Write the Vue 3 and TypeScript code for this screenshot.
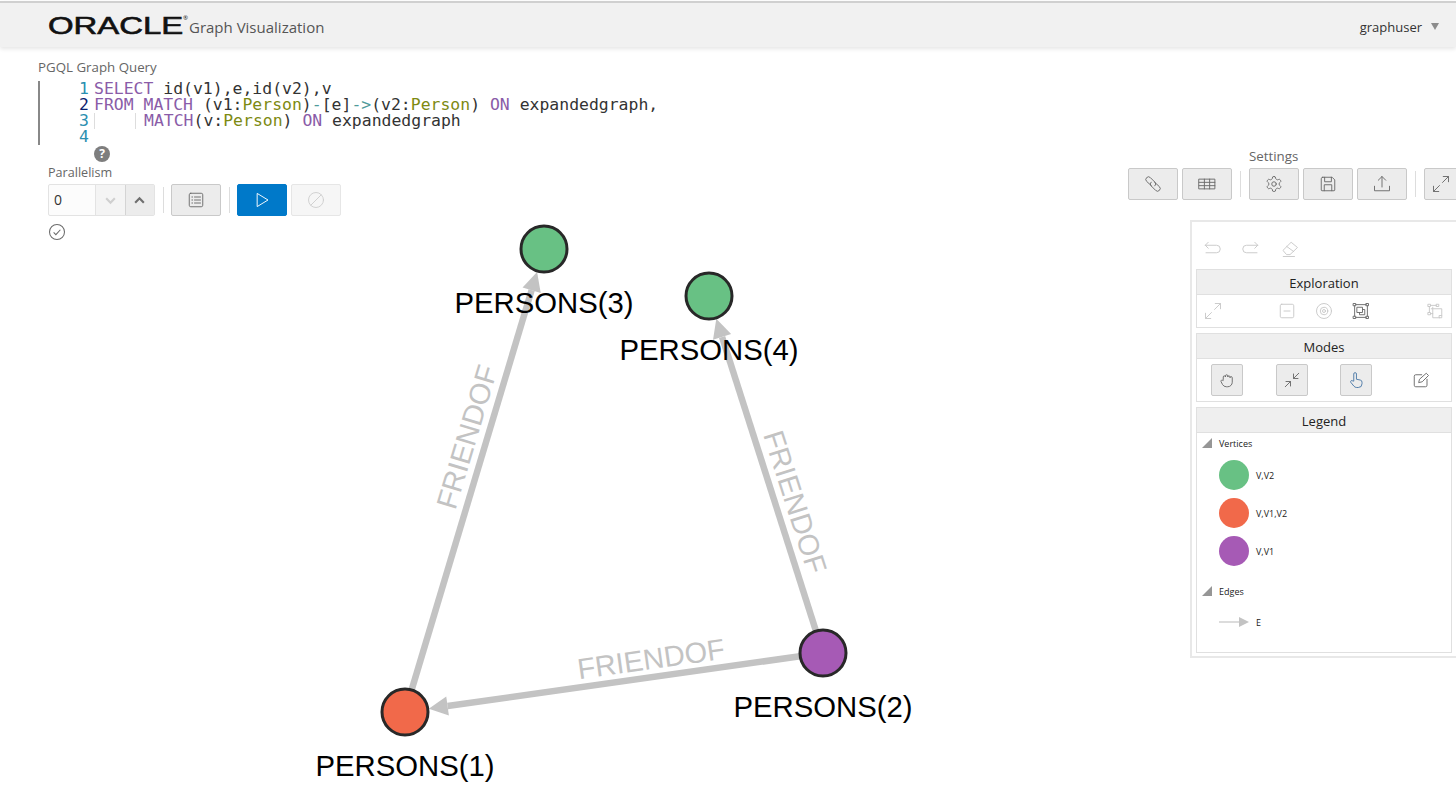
<script setup lang="ts">
interface GraphNode {
  id: number;
  x: number;
  y: number;
  color: string;
  labelX: number;
  labelY: number;
}

interface Edge {
  from: number;
  to: number;
  labelX: number;
  labelY: number;
}

const icons: Record<string, string> = {
  link: 'M10 14.5 3.5 8.5a3.5 3.5 0 0 1 5-5l6 6a3.5 3.5 0 0 1 0 5M14 9.5l6.5 6a3.5 3.5 0 0 1-5 5l-6-6a3.5 3.5 0 0 1 0-5',
  table: 'M1.5 5.5h21v13h-21zM1.5 9.8h21M1.5 14.2h21M8.5 5.5v13M15.5 5.5v13',
  gear: 'M12.22 2h-.44a2 2 0 0 0-2 2v.18a2 2 0 0 1-1 1.73l-.43.25a2 2 0 0 1-2 0l-.15-.08a2 2 0 0 0-2.73.73l-.22.38a2 2 0 0 0 .73 2.73l.15.1a2 2 0 0 1 1 1.72v.51a2 2 0 0 1-1 1.74l-.15.09a2 2 0 0 0-.73 2.73l.22.38a2 2 0 0 0 2.73.73l.15-.08a2 2 0 0 1 2 0l.43.25a2 2 0 0 1 1 1.73V20a2 2 0 0 0 2 2h.44a2 2 0 0 0 2-2v-.18a2 2 0 0 1 1-1.73l.43-.25a2 2 0 0 1 2 0l.15.08a2 2 0 0 0 2.73-.73l.22-.39a2 2 0 0 0-.73-2.73l-.15-.08a2 2 0 0 1-1-1.74v-.5a2 2 0 0 1 1-1.74l.15-.09a2 2 0 0 0 .73-2.73l-.22-.38a2 2 0 0 0-2.73-.73l-.15.08a2 2 0 0 1-2 0l-.43-.25a2 2 0 0 1-1-1.73V4a2 2 0 0 0-2-2zM15 12a3 3 0 1 1-6 0 3 3 0 0 1 6 0z',
  save: 'M5 3h12.5L21 6.5V20a1 1 0 0 1-1 1H4a1 1 0 0 1-1-1V5a2 2 0 0 1 2-2zM7.5 3v6h9V3M7 21v-8h10v8',
  upload: 'M12 16V2M7 7l5-5 5 5M2 15v6h20v-6',
  expand: 'M14 10l8-8M15 2h7v7M10 14l-8 8M2 15v7h7',
  collapse: 'M21 3l-7 7M14 4v6h6M3 21l7-7M4 14h6v6',
  undo: 'M7 3 3 7l4 4M3 7h15a5 5 0 0 1 0 10H4',
  redo: 'M17 3l4 4-4 4M21 7H6a5 5 0 0 0 0 10h14',
  eraser: 'M3 13.5 13.5 3 22 10 12 19.5H8zM7.5 8.5l9.5 7M3 22h15',
  minusBox: 'M5 3h14a2 2 0 0 1 2 2v14a2 2 0 0 1-2 2H5a2 2 0 0 1-2-2V5a2 2 0 0 1 2-2zM8 12h8',
  target: 'M22 12a10 10 0 1 1-20 0 10 10 0 0 1 20 0zM17 12a5 5 0 1 1-10 0 5 5 0 0 1 10 0zM14 12a2 2 0 1 1-4 0 2 2 0 0 1 4 0z',
  focus: 'M2 2h3v3H2zM19 2h3v3h-3zM2 19h3v3H2zM19 19h3v3h-3zM5 3.5h14M5 20.5h14M3.5 5v14M20.5 5v14M7 7h7v7H7zM10 14v3h7v-7h-3',
  group: 'M3 3h3v3H3zM3 14h3v3H3zM14 3h3v3h-3zM18 18h3v3h-3zM6 4.5h8M4.5 6v8M7 9h14v9M9 7v14h9M6 15.5h3',
  hand: 'M7 11V8a1.5 1.5 0 0 1 3 0V6.5a1.5 1.5 0 0 1 3 0V8a1.5 1.5 0 0 1 3 0v1a1.5 1.5 0 0 1 3 0v6a6 6 0 0 1-6 6h-2a6 6 0 0 1-5-3l-2-4a1.5 1.5 0 0 1 2.5-1.5z',
  pointer: 'M9 13V4a1.8 1.8 0 0 1 3.6 0v7l5 1a3 3 0 0 1 2.4 3v2a5 5 0 0 1-5 5h-2a5 5 0 0 1-4-2l-4-5a1.6 1.6 0 0 1 2.4-2z',
  edit: 'M20 11v8a2 2 0 0 1-2 2H5a2 2 0 0 1-2-2V7a2 2 0 0 1 2-2h8M9 15l1-4L19 3l3 3-8 8z',
  list: 'M5 3h14a2 2 0 0 1 2 2v14a2 2 0 0 1-2 2H5a2 2 0 0 1-2-2V5a2 2 0 0 1 2-2zM10 8h8M10 12h8M10 16h8M6.5 8h1M6.5 12h1M6.5 16h1',
  play: 'M6 3.5 20 12 6 20.5z',
  ban: 'M22 12a10 10 0 1 1-20 0 10 10 0 0 1 20 0zM5 19 19 5',
  check: 'M22 12a10 10 0 1 1-20 0 10 10 0 0 1 20 0zM7.5 12.5l3 3 6-6.5',
};

const nodes: GraphNode[] = [
  { id: 1, x: 405, y: 712, color: '#f1694a', labelX: 405, labelY: 776 },
  { id: 2, x: 823, y: 653, color: '#a65ab5', labelX: 823, labelY: 717 },
  { id: 3, x: 544, y: 249, color: '#68c184', labelX: 544, labelY: 313 },
  { id: 4, x: 709, y: 296, color: '#68c184', labelX: 709, labelY: 360 },
];

const edges: Edge[] = [
  { from: 1, to: 3, labelX: 467, labelY: 437 },
  { from: 2, to: 4, labelX: 795, labelY: 502 },
  { from: 2, to: 1, labelX: 651, labelY: 659 },
];

// edge geometry, the head stops at the rim of the target circle
function nodeById(id: number): GraphNode {
  return nodes.find((n) => n.id === id) as GraphNode;
}

const drawnEdges = edges.map((edge) => {
  const a = nodeById(edge.from);
  const b = nodeById(edge.to);
  const len = Math.hypot(b.x - a.x, b.y - a.y);
  const ux = (b.x - a.x) / len;
  const uy = (b.y - a.y) / len;
  const tipX = b.x - ux * 24;
  const tipY = b.y - uy * 24;
  const baseX = tipX - ux * 19;
  const baseY = tipY - uy * 19;
  let angle = (Math.atan2(uy, ux) * 180) / Math.PI;
  if (angle > 90) angle -= 180;
  if (angle < -90) angle += 180;
  return {
    key: `${edge.from}-${edge.to}`,
    x1: a.x,
    y1: a.y,
    x2: baseX,
    y2: baseY,
    head: `${tipX},${tipY} ${baseX - uy * 9.5},${baseY + ux * 9.5} ${baseX + uy * 9.5},${baseY - ux * 9.5}`,
    labelX: edge.labelX,
    labelY: edge.labelY,
    angle,
  };
});

const legendVertices = [
  { label: 'V,V2', color: '#68c184' },
  { label: 'V,V1,V2', color: '#f1694a' },
  { label: 'V,V1', color: '#a65ab5' },
];

const explorationIcons = [
  { name: 'expand', on: false },
  { name: 'spacer', on: false },
  { name: 'minusBox', on: false },
  { name: 'target', on: false },
  { name: 'focus', on: true },
  { name: 'spacer', on: false },
  { name: 'group', on: false },
];
</script>

<template>
  <div class="page">
    <header class="topbar">
      <div class="brand">
        <span class="logo">ORACLE</span>
        <span class="reg">®</span>
        <span class="title">Graph Visualization</span>
      </div>
      <div class="user">
        <span>graphuser</span>
        <i class="caret"></i>
      </div>
    </header>

    <section class="query">
      <div class="query-label">PGQL Graph Query</div>
      <div class="editor">
        <div class="gutter">
          <span>1</span>
          <span class="active">2</span>
          <span>3</span>
          <span>4</span>
        </div>
        <pre class="code"><span class="kw">SELECT</span> id(v1),e,id(v2),v
<span class="kw">FROM</span> <span class="kw">MATCH</span> (v1:<span class="ty">Person</span>)<span class="op">-</span>[e]<span class="op">-&gt;</span>(v2:<span class="ty">Person</span>) <span class="kw">ON</span> expandedgraph,
<span class="guide"></span><span class="kw">MATCH</span>(v:<span class="ty">Person</span>) <span class="kw">ON</span> expandedgraph
</pre>
      </div>
      <div class="help">?</div>
    </section>

    <section class="tools">
      <div class="run-tools">
        <div class="field-label">Parallelism</div>
        <div class="run-row">
          <div class="spinner">
            <span class="spin-value">0</span>
            <span class="spin-btn off">
              <svg viewBox="0 0 24 24" class="chev"><path d="M4 8l8 8 8-8" /></svg>
            </span>
            <span class="spin-btn">
              <svg viewBox="0 0 24 24" class="chev"><path d="M4 16l8-8 8 8" /></svg>
            </span>
          </div>
          <span class="sep"></span>
          <button class="btn">
            <svg viewBox="0 0 24 24" class="icon"><path :d="icons.list" /></svg>
          </button>
          <span class="sep"></span>
          <button class="btn primary">
            <svg viewBox="0 0 24 24" class="icon"><path :d="icons.play" /></svg>
          </button>
          <button class="btn disabled">
            <svg viewBox="0 0 24 24" class="icon"><path :d="icons.ban" /></svg>
          </button>
        </div>
        <svg viewBox="0 0 24 24" class="status"><path :d="icons.check" /></svg>
      </div>

      <div class="side">
        <div class="settings">
          <div class="settings-label">Settings</div>
          <div class="settings-row">
            <button class="btn"><svg viewBox="0 0 24 24" class="icon"><path :d="icons.link" /></svg></button>
            <button class="btn"><svg viewBox="0 0 24 24" class="icon"><path :d="icons.table" /></svg></button>
            <span class="sep"></span>
            <button class="btn"><svg viewBox="0 0 24 24" class="icon"><path :d="icons.gear" /></svg></button>
            <button class="btn"><svg viewBox="0 0 24 24" class="icon"><path :d="icons.save" /></svg></button>
            <button class="btn"><svg viewBox="0 0 24 24" class="icon"><path :d="icons.upload" /></svg></button>
            <span class="sep"></span>
            <button class="btn narrow"><svg viewBox="0 0 24 24" class="icon"><path :d="icons.expand" /></svg></button>
          </div>
        </div>

        <aside class="panel">
          <div class="history">
            <svg viewBox="0 0 24 24" class="icon faint"><path :d="icons.undo" /></svg>
            <svg viewBox="0 0 24 24" class="icon faint"><path :d="icons.redo" /></svg>
            <svg viewBox="0 0 24 24" class="icon faint"><path :d="icons.eraser" /></svg>
          </div>

          <div class="box">
            <div class="box-head">Exploration</div>
            <div class="explore-row">
              <template v-for="(item, i) in explorationIcons" :key="i">
                <span v-if="item.name === 'spacer'" class="explore-gap"></span>
                <svg v-else viewBox="0 0 24 24" class="icon" :class="{ faint: !item.on }">
                  <path :d="icons[item.name]" />
                </svg>
              </template>
            </div>
          </div>

          <div class="box">
            <div class="box-head">Modes</div>
            <div class="modes-row">
              <button class="mode"><svg viewBox="0 0 24 24" class="icon"><path :d="icons.hand" /></svg></button>
              <button class="mode"><svg viewBox="0 0 24 24" class="icon"><path :d="icons.collapse" /></svg></button>
              <button class="mode current"><svg viewBox="0 0 24 24" class="icon"><path :d="icons.pointer" /></svg></button>
              <button class="mode plain"><svg viewBox="0 0 24 24" class="icon"><path :d="icons.edit" /></svg></button>
            </div>
          </div>

          <div class="box legend">
            <div class="box-head">Legend</div>
            <div class="legend-group"><i class="corner"></i>Vertices</div>
            <div v-for="v in legendVertices" :key="v.label" class="legend-item">
              <span class="swatch" :style="{ background: v.color }"></span>
              <span>{{ v.label }}</span>
            </div>
            <div class="legend-group edges"><i class="corner"></i>Edges</div>
            <div class="legend-edge">
              <svg width="30" height="12" viewBox="0 0 30 12">
                <path d="M0 6h20" stroke="#dcdcdc" stroke-width="2" />
                <path d="M20 1l10 5-10 5z" fill="#c3c3c3" />
              </svg>
              <span>E</span>
            </div>
          </div>
        </aside>
      </div>
    </section>

    <!-- graph canvas, node places are the content -->
    <svg class="graph" width="1190" height="788" viewBox="0 0 1190 788">
      <g v-for="e in drawnEdges" :key="e.key">
        <line :x1="e.x1" :y1="e.y1" :x2="e.x2" :y2="e.y2" class="edge" />
        <polygon :points="e.head" class="head" />
        <text
          class="edge-label"
          :x="e.labelX"
          :y="e.labelY"
          :transform="`rotate(${e.angle} ${e.labelX} ${e.labelY})`"
        >FRIENDOF</text>
      </g>
      <g v-for="n in nodes" :key="n.id">
        <circle :cx="n.x" :cy="n.y" r="23" :fill="n.color" class="node" />
        <text class="node-label" :x="n.labelX" :y="n.labelY">PERSONS({{ n.id }})</text>
      </g>
    </svg>
  </div>
</template>

<style scoped>
.page {
  position: relative;
  width: 1456px;
  height: 788px;
  overflow: hidden;
  background: #fff;
  font-family: "Open Sans", "Noto Sans", sans-serif;
  color: #333;
}

.topbar {
  height: 44px;
  margin-top: 1px;
  border-top: 2px solid #d0d0d0;
  background: #f1f1f1;
  box-shadow: 0 2px 4px rgba(0, 0, 0, 0.1);
  display: flex;
  align-items: center;
  justify-content: space-between;
  padding: 0 17px 0 48px;
}

.brand {
  display: flex;
  align-items: center;
}

.logo {
  display: inline-block;
  width: 95px;
  margin-right: 41px;
  margin-top: 2px;
  font: 23px/23px "Liberation Sans", sans-serif;
  -webkit-text-stroke: 0.6px #111;
  color: #111;
  transform: scaleX(1.43);
  transform-origin: left center;
}

.reg {
  font-size: 6px;
  margin: -14px 0 0 -1px;
  color: #111;
}

.title {
  font-size: 15px;
  color: #555;
  margin-left: 1px;
  margin-top: 4px;
}

.user {
  display: flex;
  align-items: center;
  font-size: 13px;
  color: #333;
  gap: 9px;
  margin-top: 3px;
}

.caret {
  width: 0;
  height: 0;
  border-left: 4.5px solid transparent;
  border-right: 4.5px solid transparent;
  border-top: 7px solid #8c8c8c;
}

.query {
  padding: 12px 0 0 38px;
  height: 101px;
  box-sizing: border-box;
  position: relative;
}

.query-label {
  font-size: 13.3px;
  line-height: 16px;
  color: #666;
}

.editor {
  display: flex;
  margin-top: 6px;
  border-left: 2px solid #888;
  height: 64px;
}

.gutter {
  width: 49px;
  display: flex;
  flex-direction: column;
  align-items: flex-end;
  font: 16.45px/16px "DejaVu Sans Mono", monospace;
  color: #2a8fb0;
}

.gutter .active {
  color: #0b216f;
}

.code {
  margin: 0 0 0 5px;
  font: 16.45px/16px "DejaVu Sans Mono", monospace;
  color: #333;
}

.kw {
  color: #8a5ca8;
}

.ty {
  color: #7d8a12;
}

.op {
  color: #4f9a9a;
}

.guide {
  display: inline-block;
  width: 40px;
  height: 16px;
  margin-right: 8px;
  border-left: 1px solid #ddd;
  border-right: 1px solid #ddd;
  vertical-align: top;
}

.help {
  position: absolute;
  left: 94px;
  top: 99px;
  width: 16px;
  height: 16px;
  border-radius: 50%;
  background: #7e7e7e;
  color: #fff;
  font-size: 12px;
  font-weight: 700;
  line-height: 16px;
  text-align: center;
}

.tools {
  display: flex;
  justify-content: space-between;
  align-items: flex-start;
  padding-left: 48px;
}

.field-label {
  font-size: 12.6px;
  line-height: 16px;
  color: #666;
  margin-top: 17px;
}

.run-row {
  display: flex;
  align-items: center;
  margin-top: 3px;
}

.spinner {
  display: flex;
  width: 107px;
  height: 32px;
  box-sizing: border-box;
  border: 1px solid #e3e3e3;
  border-radius: 2px;
  background: #fcfcfc;
  font-size: 14px;
}

.spin-value {
  width: 47px;
  line-height: 30px;
  padding-left: 5px;
  box-sizing: border-box;
}

.spin-btn {
  width: 29px;
  display: flex;
  align-items: center;
  justify-content: center;
  background: #ececec;
  border-left: 1px solid #d4d4d4;
}

.spin-btn.off {
  background: #f4f4f4;
  border-left-color: #e3e3e3;
}

.chev {
  width: 13px;
  height: 13px;
  fill: none;
  stroke: #6f6f6f;
  stroke-width: 4;
}

.spin-btn.off .chev {
  stroke: #cfcfcf;
}

.sep {
  flex: none;
  width: 1px;
  height: 26px;
  background: #ddd;
  margin: 0 7.5px;
}

.btn {
  width: 50px;
  height: 32px;
  padding: 0;
  box-sizing: border-box;
  border: 1px solid #c9c9c9;
  border-radius: 2px;
  background: #ececec;
  display: flex;
  align-items: center;
  justify-content: center;
  flex: none;
}

.btn.narrow {
  width: 34px;
}

.icon {
  width: 18px;
  height: 18px;
  fill: none;
  stroke: #6b6b6b;
  stroke-width: 1.25;
  stroke-linejoin: round;
  stroke-linecap: round;
}

.faint {
  stroke: #c9c9c9;
}

.btn.primary {
  background: #0079c9;
  border-color: #0079c9;
}

.btn.primary .icon {
  stroke: #fff;
}

.btn.disabled {
  background: #f6f6f6;
  border-color: #e6e6e6;
  margin-left: 4px;
}

.btn.disabled .icon {
  stroke: #cfcfcf;
}

.status {
  display: block;
  width: 18px;
  height: 18px;
  margin-top: 7px;
  fill: none;
  stroke: #6b6b6b;
  stroke-width: 1.4;
}

.side {
  width: 328px;
  flex: none;
}

.settings-label {
  font-size: 13.3px;
  line-height: 16px;
  color: #666;
  margin-left: 121px;
}

.settings-row {
  display: flex;
  align-items: center;
  gap: 4px;
  margin-top: 4px;
}

.settings-row .sep {
  margin: 0 4px;
}

.panel {
  margin: 20px 0 0 62px;
  width: 270px;
  height: 438px;
  box-sizing: border-box;
  border: 2px solid #e8e8e8;
  padding: 0 6px 0 4px;
}

.history {
  height: 47px;
  display: flex;
  align-items: center;
  gap: 21px;
  padding: 6px 0 0 7px;
  box-sizing: border-box;
}

.box {
  border: 1px solid #e0e0e0;
  margin-bottom: 5px;
}

.box-head {
  height: 24px;
  line-height: 26px;
  background: #efefef;
  border-bottom: 1px solid #e0e0e0;
  text-align: center;
  font-size: 13px;
  color: #222;
}

.explore-row {
  height: 32px;
  display: flex;
  align-items: center;
  justify-content: space-between;
  padding: 0 7px;
}

.explore-gap {
  width: 18px;
}

.modes-row {
  height: 42px;
  display: flex;
  align-items: center;
  justify-content: space-between;
  padding: 0 14px;
}

.mode {
  width: 32px;
  height: 32px;
  padding: 0;
  box-sizing: border-box;
  border: 1px solid #c9c9c9;
  border-radius: 2px;
  background: #ececec;
  display: flex;
  align-items: center;
  justify-content: center;
}

.mode.plain {
  background: transparent;
  border-color: transparent;
}

.mode.current .icon {
  stroke: #4d7aa8;
}

.legend {
  height: 246px;
  box-sizing: border-box;
  font-size: 9px;
  color: #222;
}

.legend-group {
  display: flex;
  align-items: center;
  gap: 7px;
  padding-left: 5px;
  height: 20px;
  margin-bottom: 3px;
}

.legend-group.edges {
  margin-top: 11px;
}

.corner {
  width: 0;
  height: 0;
  border-bottom: 10px solid #969696;
  border-left: 10px solid transparent;
}

.legend-item {
  display: flex;
  align-items: center;
  gap: 7px;
  padding-left: 22px;
  height: 38px;
}

.swatch {
  width: 30px;
  height: 30px;
  border-radius: 50%;
}

.legend-edge {
  display: flex;
  align-items: center;
  gap: 7px;
  padding-left: 22px;
  height: 36px;
}

.graph {
  position: absolute;
  left: 0;
  top: 0;
  pointer-events: none;
}

.edge {
  stroke: #c3c3c3;
  stroke-width: 6.5;
}

.head {
  fill: #c3c3c3;
}

.node {
  stroke: #282828;
  stroke-width: 3;
}

.node-label {
  font: 29.3px "Liberation Sans", sans-serif;
  fill: #000;
  text-anchor: middle;
}

.edge-label {
  font: 29px "Liberation Sans", sans-serif;
  fill: #c3c3c3;
  text-anchor: middle;
  dominant-baseline: central;
}
</style>
